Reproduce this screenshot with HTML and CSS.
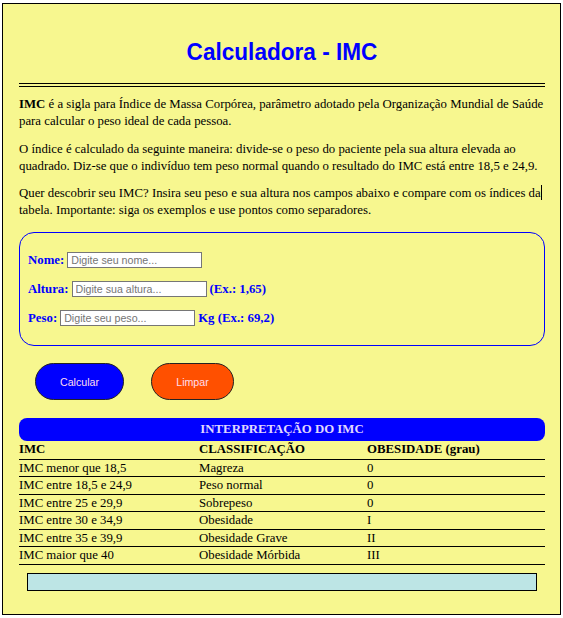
FILE: index.html
```html
<!DOCTYPE html>
<html lang="pt-BR">
<head>
<meta charset="utf-8">
<title>Calculadora - IMC</title>
<link rel="stylesheet" href="styles.css">
</head>
<body>
<div class="page">
  <h1 class="title">Calculadora - IMC</h1>
  <div class="rule"></div>
  <p class="intro"><b>IMC</b> é a sigla para Índice de Massa Corpórea, parâmetro adotado pela Organização Mundial de Saúde para calcular o peso ideal de cada pessoa.</p>
  <p class="intro">O índice é calculado da seguinte maneira: divide-se o peso do paciente pela sua altura elevada ao quadrado. Diz-se que o indivíduo tem peso normal quando o resultado do IMC está entre 18,5 e 24,9.</p>
  <p class="intro">Quer descobrir seu IMC? Insira seu peso e sua altura nos campos abaixo e compare com os índices da<span class="caret"></span> tabela. Importante: siga os exemplos e use pontos como separadores.</p>
  <form class="form-box">
    <div class="field"><label for="nome">Nome:</label><input id="nome" type="text" placeholder="Digite seu nome..."></div>
    <div class="field"><label for="altura">Altura:</label><input id="altura" type="text" placeholder="Digite sua altura..."><span>(Ex.: 1,65)</span></div>
    <div class="field"><label for="peso">Peso:</label><input id="peso" type="text" placeholder="Digite seu peso..."><span>Kg (Ex.: 69,2)</span></div>
  </form>
  <div class="actions">
    <button type="button" class="btn btn-calc">Calcular</button>
    <button type="button" class="btn btn-clear">Limpar</button>
  </div>
  <table class="imc-table">
    <caption>INTERPRETAÇÃO DO IMC</caption>
    <colgroup><col class="c1"><col class="c2"><col class="c3"></colgroup>
    <thead>
      <tr><th>IMC</th><th>CLASSIFICAÇÃO</th><th>OBESIDADE (grau)</th></tr>
    </thead>
    <tbody>
      <tr><td>IMC menor que 18,5</td><td>Magreza</td><td>0</td></tr>
      <tr><td>IMC entre 18,5 e 24,9</td><td>Peso normal</td><td>0</td></tr>
      <tr><td>IMC entre 25 e 29,9</td><td>Sobrepeso</td><td>0</td></tr>
      <tr><td>IMC entre 30 e 34,9</td><td>Obesidade</td><td>I</td></tr>
      <tr><td>IMC entre 35 e 39,9</td><td>Obesidade Grave</td><td>II</td></tr>
      <tr><td>IMC maior que 40</td><td>Obesidade Mórbida</td><td>III</td></tr>
    </tbody>
  </table>
  <div class="result"></div>
</div>
</body>
</html>
```
FILE: styles.css
```css
* { box-sizing: border-box; }
html, body { margin: 0; padding: 0; background: #fff; }
body {
  font-family: "Liberation Serif", "Times New Roman", serif;
  font-size: 12.8px;
  color: #000;
}
.page {
  margin: 3px 2px;
  border: 1px solid #000;
  background: #f7f78f;
  padding: 34px 15px 23px 16px;
}
.title {
  margin: 0;
  text-align: center;
  font-family: "Liberation Sans", Arial, sans-serif;
  font-size: 22.6px;
  line-height: 28px;
  font-weight: bold;
  color: #0000ff;
  transform: scaleY(1.08);
}
.rule {
  margin-top: 17px;
  height: 0;
  border-top: 4px double #000;
}
.intro {
  margin: 9px 0;
  line-height: 17px;
}
.intro + .intro { margin-top: 10.5px; }
.caret {
  display: inline-block;
  width: 1px;
  height: 15px;
  background: #000;
  vertical-align: -3px;
}
.form-box {
  margin: 13px 0 0;
  border: 1px solid #0000ff;
  border-radius: 15px;
  padding: 12.5px 8px;
}
.field {
  height: 29px;
  display: flex;
  align-items: center;
  gap: 3px;
  color: #0000ff;
  font-weight: bold;
}
.field input {
  width: 135px;
  height: 16px;
  margin: 0;
  padding: 0 3px;
  border: 1px solid #767676;
  background: #fff;
  font-family: "Liberation Sans", Arial, sans-serif;
  font-size: 10.67px;
}
.field input::placeholder { color: #757575; }
.actions {
  display: flex;
  gap: 27px;
  padding: 17px 0 0 16px;
}
.btn {
  height: 37px;
  border-radius: 19px;
  border: 1px solid #222;
  font-family: "Liberation Sans", Arial, sans-serif;
  font-size: 10.67px;
  color: #fde;
  padding: 0;
}
.btn-calc { width: 89px; background: #0000ff; }
.btn-clear { width: 83px; background: #ff5000; }
.imc-table {
  margin-top: 18px;
  width: 100%;
  border-collapse: collapse;
  border-spacing: 0;
}
.imc-table caption {
  height: 23px;
  line-height: 23px;
  background: #0000ff;
  color: #e0d8ff;
  font-weight: bold;
  border-radius: 8px;
}
.c1 { width: 180px; }
.c2 { width: 168px; }
.imc-table th, .imc-table td {
  padding: 0;
  text-align: left;
  border-bottom: 1px solid #000;
  line-height: 16.5px;
  vertical-align: middle;
}
.imc-table th { font-weight: bold; line-height: 17.5px; }
.result {
  margin: 8px 8px 0;
  height: 18px;
  border: 1px solid #000;
  background: #bde5e5;
}
```
